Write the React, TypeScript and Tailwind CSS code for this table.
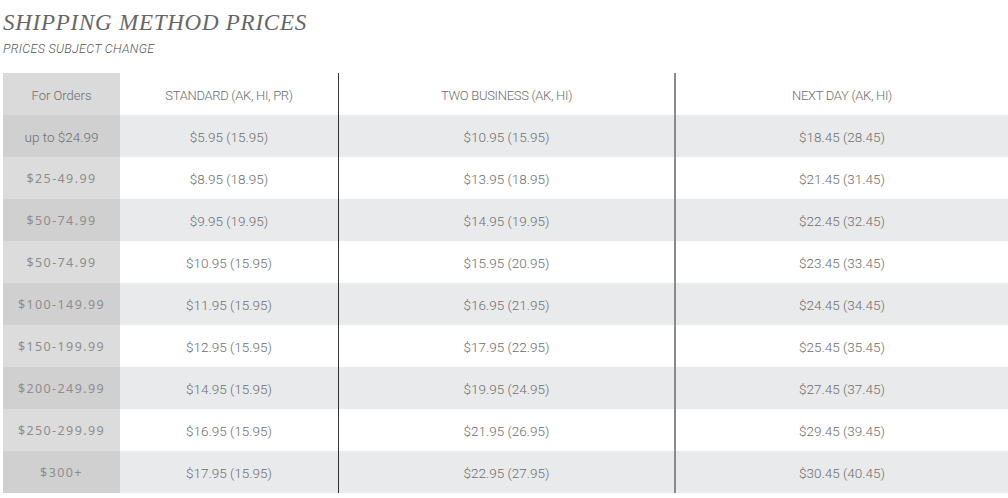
const rows = [
  ["up to $24.99", "$5.95 (15.95)", "$10.95 (15.95)", "$18.45 (28.45)"],
  ["$25-49.99", "$8.95 (18.95)", "$13.95 (18.95)", "$21.45 (31.45)"],
  ["$50-74.99", "$9.95 (19.95)", "$14.95 (19.95)", "$22.45 (32.45)"],
  ["$50-74.99", "$10.95 (15.95)", "$15.95 (20.95)", "$23.45 (33.45)"],
  ["$100-149.99", "$11.95 (15.95)", "$16.95 (21.95)", "$24.45 (34.45)"],
  ["$150-199.99", "$12.95 (15.95)", "$17.95 (22.95)", "$25.45 (35.45)"],
  ["$200-249.99", "$14.95 (15.95)", "$19.95 (24.95)", "$27.45 (37.45)"],
  ["$250-299.99", "$16.95 (15.95)", "$21.95 (26.95)", "$29.45 (39.45)"],
  ["$300+", "$17.95 (15.95)", "$22.95 (27.95)", "$30.45 (40.45)"],
];

const narrow = "font-['Roboto',sans-serif] font-light";

export default function App() {
  return (
    <div className="w-[1008px] h-[498px] bg-white overflow-hidden pl-[3px]">
      <h1 className="pt-[10px] font-['Liberation_Serif',serif] italic text-[23px] leading-[26px] tracking-[0.75px] text-[#666]">
        SHIPPING METHOD PRICES
      </h1>
      <p className={`${narrow} italic text-[12.5px] leading-[14px] mt-[6px] tracking-[0.3px] text-[#555]`}>
        PRICES SUBJECT CHANGE
      </p>

      <div className={`mt-[17px] ${narrow} text-[13.5px] text-[#6e6e6e]`}>
        <div className="grid grid-cols-[117px_218px_336px_1fr] h-[42px] pt-[3px]">
          <div className="bg-[#dadada] -mt-[3px] pt-[3px] flex items-center justify-center text-[13px]">For Orders</div>
          <div className="flex items-center justify-center text-[13px] tracking-[-0.3px]">STANDARD (AK, HI, PR)</div>
          <div className="flex items-center justify-center border-l border-[#333] -mt-[3px] pt-[3px] text-[13px] tracking-[-0.3px]">
            TWO BUSINESS (AK, HI)
          </div>
          <div className="flex items-center justify-center border-l-2 border-[#8a8a8a] -mt-[3px] pt-[3px] text-[13px] tracking-[-0.3px]">
            NEXT DAY (AK, HI)
          </div>
        </div>
        {rows.map((r, i) => {
          const odd = i % 2 === 0;
          return (
            <div
              key={i}
              className={`grid grid-cols-[117px_218px_336px_1fr] h-[42px] pt-[2px] ${odd ? "bg-[#e9eaec]" : "bg-white"}`}
            >
              <div
                className={`flex items-center justify-center -mt-[2px] pt-[2px] ${odd ? "bg-[#d0d0d1]" : "bg-[#dcdcdc]"} ${
                  i === 0 ? "" : "font-['Noto_Sans',sans-serif] font-normal text-[12.5px] tracking-[1.4px] text-[#8e8e8e]"
                }`}
              >
                {r[0]}
              </div>
              <div className="flex items-center justify-center">{r[1]}</div>
              <div className="flex items-center justify-center border-l border-[#333] -mt-[2px] pt-[2px]">{r[2]}</div>
              <div className="flex items-center justify-center border-l-2 border-[#8a8a8a] -mt-[2px] pt-[2px]">{r[3]}</div>
            </div>
          );
        })}
      </div>
    </div>
  );
}
